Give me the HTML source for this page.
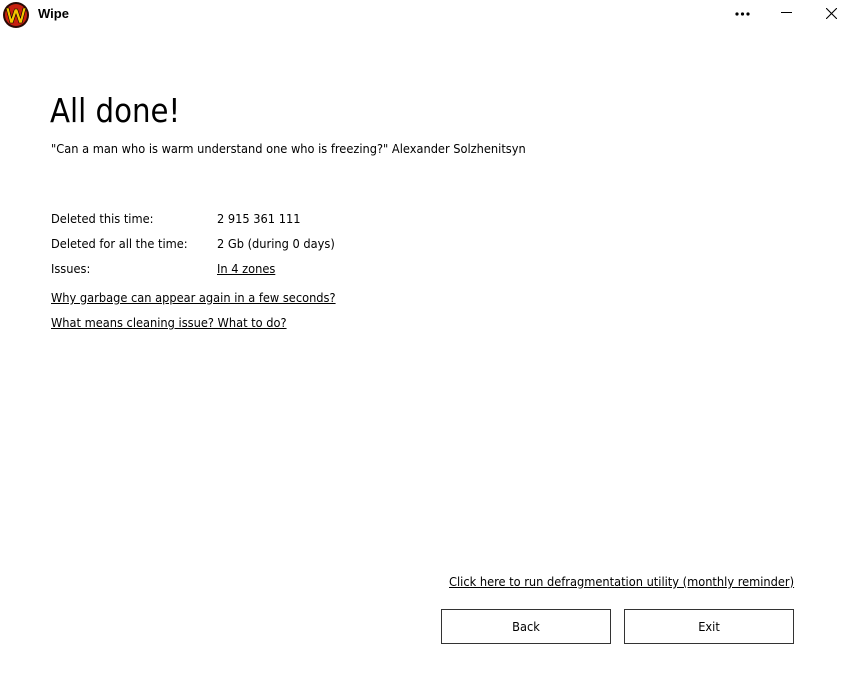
<!DOCTYPE html>
<html><head><meta charset="utf-8"><style>
body{margin:0;width:853px;height:673px;background:#fff;font-family:"DejaVu Sans Condensed","Liberation Sans",sans-serif;color:#000;position:relative;overflow:hidden;font-size:12.7px}
.a{position:absolute;white-space:nowrap}
u{text-decoration:underline}
.btn{position:absolute;top:609px;width:168px;height:33px;border:1px solid #333;text-align:center;line-height:33px;font-size:12.7px}
</style></head><body>
<svg class="a" style="left:2px;top:1px" width="28" height="28" viewBox="0 0 28 28">
<circle cx="14" cy="14" r="13" fill="#2a0a05"/>
<circle cx="14" cy="14" r="11" fill="#c8200f"/>
<path d="M4 7 L8 22 L11 22 L14 13 L17 22 L20 22 L24 7 L21 7 L18.5 17 L15.5 8 L12.5 8 L9.5 17 L7 7 Z" fill="#f5c400" stroke="#000" stroke-width="0.6"/>
</svg>
<div class="a" style="left:38px;top:6px;font-size:13px;font-weight:bold;font-family:'Liberation Sans',sans-serif">Wipe</div>
<svg class="a" style="left:735px;top:12px" width="15" height="4"><circle cx="2" cy="2" r="1.6"/><circle cx="7.5" cy="2" r="1.6"/><circle cx="13" cy="2" r="1.6"/></svg>
<div class="a" style="left:781px;top:12px;width:11px;height:1px;background:#000"></div>
<svg class="a" style="left:826px;top:8px" width="11" height="11"><path d="M0 0L11 11M11 0L0 11" stroke="#000" stroke-width="1.1"/></svg>
<div class="a" style="left:50px;top:92px;font-size:32.5px">All done!</div>
<div class="a" style="left:51px;top:141px">"Can a man who is warm understand one who is freezing?" Alexander Solzhenitsyn</div>
<div class="a" style="left:51px;top:211px">Deleted this time:</div>
<div class="a" style="left:217px;top:211px">2 915 361 111</div>
<div class="a" style="left:51px;top:236px">Deleted for all the time:</div>
<div class="a" style="left:217px;top:236px">2 Gb (during 0 days)</div>
<div class="a" style="left:51px;top:261px">Issues:</div>
<div class="a" style="left:217px;top:261px"><u>In 4 zones</u></div>
<div class="a" style="left:51px;top:290px"><u>Why garbage can appear again in a few seconds?</u></div>
<div class="a" style="left:51px;top:315px"><u>What means cleaning issue? What to do?</u></div>
<div class="a" style="left:449px;top:574px"><u>Click here to run defragmentation utility (monthly reminder)</u></div>
<div class="btn" style="left:441px">Back</div>
<div class="btn" style="left:624px">Exit</div>
</body></html>
